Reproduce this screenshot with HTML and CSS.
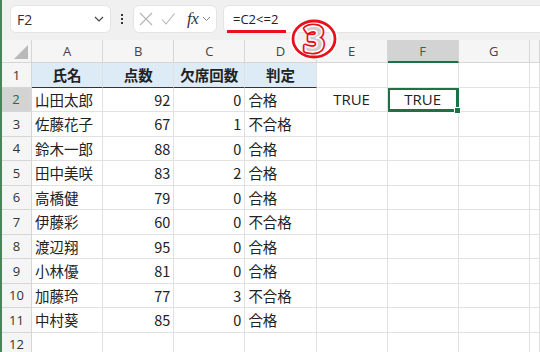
FILE: index.html
```html
<!DOCTYPE html>
<html lang="ja">
<head>
    <meta charset="UTF-8">
    <meta name="viewport" content="width=device-width, initial-scale=1.0">
    <title>比較演算子</title>
    <link rel="stylesheet" href="styles.css">
</head>
<body>
    <div class="app">
        <div class="toolbar">
            <div class="name-box">
                <span>F2</span>
                <svg class="chev" width="10" height="6" viewBox="0 0 10 6"><path d="M1 1l4 4 4-4" fill="none" stroke="#444" stroke-width="1.2"/></svg>
            </div>
            <div class="dots"><i></i><i></i><i></i></div>
            <div class="fx-box">
                <svg width="14" height="14" viewBox="0 0 14 14"><path d="M1 1l12 12M13 1L1 13" stroke="#b4b4b4" stroke-width="1.1"/></svg>
                <svg width="14" height="14" viewBox="0 0 14 14"><path d="M1 7.5l4 4.5L13.5 1.5" fill="none" stroke="#b4b4b4" stroke-width="1.1"/></svg>
                <span class="fx">fx</span>
                <svg width="9" height="6" viewBox="0 0 9 6"><path d="M1 1l3.5 3.5L8 1" fill="none" stroke="#888" stroke-width="1"/></svg>
            </div>
            <div class="formula">
                =C2&lt;=2
                <span class="underline"></span>
            </div>
        </div>

        <!-- 注釈の丸数字 -->
        <svg class="badge" width="56" height="50" viewBox="0 0 56 50">
            <ellipse cx="28" cy="25" rx="21" ry="18" fill="none" stroke="#fff" stroke-width="6"/>
            <ellipse cx="28" cy="25" rx="21" ry="18" fill="none" stroke="#e8101a" stroke-width="2.8"/>
            <ellipse cx="28" cy="25" rx="18.5" ry="15.5" fill="none" stroke="#fff" stroke-width="1.2"/>
            <text x="28" y="38" text-anchor="middle" class="badge-num badge-back">3</text>
            <text x="28" y="38" text-anchor="middle" class="badge-num badge-front">3</text>
        </svg>

        <div class="sheet">
            <div class="row col-head">
                <div class="corner"></div>
                <div>A</div><div>B</div><div>C</div><div>D</div><div>E</div>
                <div class="sel">F</div><div>G</div><div></div>
            </div>
            <div class="row">
                <div class="rh">1</div>
                <div class="c hd">氏名</div><div class="c hd">点数</div><div class="c hd">欠席回数</div><div class="c hd">判定</div>
                <div class="c"></div><div class="c"></div><div class="c"></div><div class="c"></div>
            </div>
            <div class="row">
                <div class="rh sel">2</div>
                <div class="c">山田太郎</div><div class="c num">92</div><div class="c num">0</div><div class="c">合格</div>
                <div class="c ctr">TRUE</div><div class="c ctr active">TRUE<span class="handle"></span></div><div class="c"></div><div class="c"></div>
            </div>
            <div class="row">
                <div class="rh">3</div>
                <div class="c">佐藤花子</div><div class="c num">67</div><div class="c num">1</div><div class="c">不合格</div>
                <div class="c"></div><div class="c"></div><div class="c"></div><div class="c"></div>
            </div>
            <div class="row">
                <div class="rh">4</div>
                <div class="c">鈴木一郎</div><div class="c num">88</div><div class="c num">0</div><div class="c">合格</div>
                <div class="c"></div><div class="c"></div><div class="c"></div><div class="c"></div>
            </div>
            <div class="row">
                <div class="rh">5</div>
                <div class="c">田中美咲</div><div class="c num">83</div><div class="c num">2</div><div class="c">合格</div>
                <div class="c"></div><div class="c"></div><div class="c"></div><div class="c"></div>
            </div>
            <div class="row">
                <div class="rh">6</div>
                <div class="c">高橋健</div><div class="c num">79</div><div class="c num">0</div><div class="c">合格</div>
                <div class="c"></div><div class="c"></div><div class="c"></div><div class="c"></div>
            </div>
            <div class="row">
                <div class="rh">7</div>
                <div class="c">伊藤彩</div><div class="c num">60</div><div class="c num">0</div><div class="c">不合格</div>
                <div class="c"></div><div class="c"></div><div class="c"></div><div class="c"></div>
            </div>
            <div class="row">
                <div class="rh">8</div>
                <div class="c">渡辺翔</div><div class="c num">95</div><div class="c num">0</div><div class="c">合格</div>
                <div class="c"></div><div class="c"></div><div class="c"></div><div class="c"></div>
            </div>
            <div class="row">
                <div class="rh">9</div>
                <div class="c">小林優</div><div class="c num">81</div><div class="c num">0</div><div class="c">合格</div>
                <div class="c"></div><div class="c"></div><div class="c"></div><div class="c"></div>
            </div>
            <div class="row">
                <div class="rh">10</div>
                <div class="c">加藤玲</div><div class="c num">77</div><div class="c num">3</div><div class="c">不合格</div>
                <div class="c"></div><div class="c"></div><div class="c"></div><div class="c"></div>
            </div>
            <div class="row">
                <div class="rh">11</div>
                <div class="c">中村葵</div><div class="c num">85</div><div class="c num">0</div><div class="c">合格</div>
                <div class="c"></div><div class="c"></div><div class="c"></div><div class="c"></div>
            </div>
            <div class="row">
                <div class="rh">12</div>
                <div class="c"></div><div class="c"></div><div class="c"></div><div class="c"></div>
                <div class="c"></div><div class="c"></div><div class="c"></div><div class="c"></div>
            </div>
        </div>
    </div>
</body>
</html>
```

FILE: styles.css
```css
body {
    margin: 0;
    background-color: #fff;
    font-family: "Noto Sans CJK JP", "Noto Sans", sans-serif;
    color: #222;
    overflow: hidden;
}
.app {
    position: relative;
    width: 538px;
    height: 352px;
    border-left: 2px solid #3f8a5c;
    overflow: hidden;
}

/* 数式バー */
.toolbar {
    display: flex;
    align-items: center;
    height: 40px;
    padding: 5px 0 7px 8px;
    box-sizing: border-box;
    background-color: #f0f0f0;
}
.name-box,
.fx-box,
.formula {
    height: 28px;
    box-sizing: border-box;
    background-color: #fff;
    border: 1px solid #e4e4e4;
    border-radius: 6px;
    display: flex;
    align-items: center;
}
.name-box {
    width: 101px;
    padding: 0 6px 0 6px;
    justify-content: space-between;
    font-family: "Open Sans", "Noto Sans", sans-serif;
    font-size: 14px;
    color: #333;
}
.dots {
    width: 22px;
    display: flex;
    flex-direction: column;
    align-items: center;
    gap: 2px;
}
.dots i {
    width: 2px;
    height: 2px;
    background-color: #333;
}
.fx-box {
    width: 84px;
    padding: 0 4px 0 5px;
    gap: 8px;
}
.fx {
    font-family: "Liberation Serif", serif;
    font-style: italic;
    font-size: 17px;
    color: #333;
    margin-left: 4px;
    margin-right: -4px;
    letter-spacing: -0.5px;
}
.formula {
    position: relative;
    flex: 1;
    margin-left: 6px;
    margin-right: -10px;
    padding-left: 9px;
    font-family: "Open Sans", "Noto Sans", sans-serif;
    font-size: 13px;
    color: #222;
}
.formula .underline {
    position: absolute;
    left: 3px;
    top: 24px;
    width: 59px;
    height: 3px;
    background-color: #e8101a;
}
.badge {
    position: absolute;
    left: 284px;
    top: 14px;
}
.badge-num {
    font-family: "Noto Sans", sans-serif;
    font-size: 35px;
    font-weight: bold;
}
.badge-back {
    fill: none;
    stroke: #e8101a;
    stroke-width: 5px;
    stroke-linejoin: round;
}
.badge-front {
    fill: #cfcfcf;
    stroke: #fff;
    stroke-width: 1.4px;
}

/* シート */
.sheet {
    --cols: 30px repeat(7, 71.14px) 1fr;
}
.row {
    display: grid;
    grid-template-columns: var(--cols);
    height: 24.5px;
}
.row > div {
    box-sizing: border-box;
    border-right: 1px solid #e1e1e1;
    border-bottom: 1px solid #e1e1e1;
    display: flex;
    align-items: center;
    white-space: nowrap;
    overflow: hidden;
}
.col-head {
    height: 23px;
}
.col-head > div {
    justify-content: center;
    background-color: #f5f5f5;
    border-color: #d6d6d6;
    font-family: "Open Sans", "Noto Sans", sans-serif;
    font-size: 13px;
    color: #444;
}
.col-head > .sel {
    background-color: #d3d3d3;
    border-bottom: 2px solid #1e7145;
    color: #1e7145;
}
.corner {
    position: relative;
}
.corner::after {
    content: '';
    position: absolute;
    right: 3px;
    bottom: 3px;
    width: 14px;
    height: 14px;
    background-color: #b9b9b9;
    clip-path: polygon(100% 0, 100% 100%, 0 100%);
}
.rh {
    justify-content: center;
    background-color: #f5f5f5;
    border-color: #d6d6d6 !important;
    font-family: "Open Sans", "Noto Sans", sans-serif;
    font-size: 13px;
    color: #333;
}
.rh.sel {
    background-color: #d3d3d3;
    border-right: 2px solid #1e7145;
    color: #1e6e40;
}
.c {
    padding: 0 3px;
    font-size: 14.5px;
}
.c.hd {
    justify-content: center;
    background-color: #ddebf7;
    border-bottom-color: #333;
    font-weight: bold;
}
.c.num {
    justify-content: flex-end;
}
.c.ctr {
    justify-content: center;
    font-family: "Open Sans", "Noto Sans", sans-serif;
    font-size: 15px;
}
.row > .active {
    position: relative;
    overflow: visible;
    box-shadow: inset 0 0 0 2px #1e7145;
    outline: 1px solid #1e7145;
    outline-offset: -1px;
}
.handle {
    position: absolute;
    right: -3px;
    bottom: -3px;
    width: 5px;
    height: 5px;
    background-color: #1e7145;
    border: 1px solid #fff;
}
```
